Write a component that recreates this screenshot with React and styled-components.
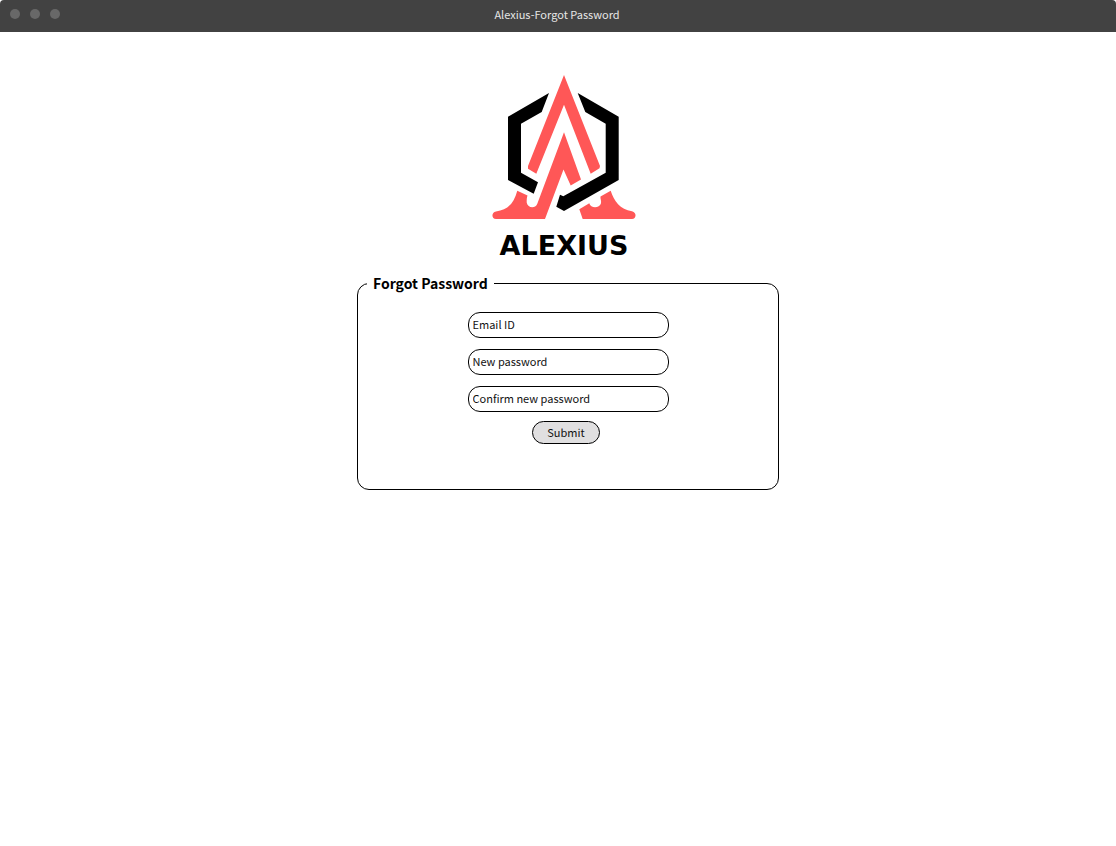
import React from "react";
import styled, { createGlobalStyle } from "styled-components";

const GlobalStyle = createGlobalStyle`
  *, *::before, *::after { box-sizing: border-box; }
  body {
    margin: 0;
    background: #fff;
    color: #000;
    font-family: "Noto Sans CJK SC", "Noto Sans", sans-serif;
    font-size: 11px;
    line-height: 16px;
  }
`;

const TitleBar = styled.header`
  display: grid;
  grid-template-columns: 1fr auto 1fr;
  align-items: center;
  height: 32px;
  padding: 0 12px 4px 10px;
  border-radius: 4px 4px 0 0;
  background: #424242;
  color: #e6e6e6;
`;

const WindowDots = styled.div`
  display: flex;
  gap: 10px;
`;

const Dot = styled.span`
  width: 10px;
  height: 10px;
  border-radius: 50%;
  background: #686868;
`;

const WindowTitle = styled.h1`
  margin: 0;
  font-size: 11px;
  font-weight: 400;
`;

const Page = styled.main`
  display: flex;
  flex-direction: column;
  align-items: center;
  padding: 40px 0 40px 20px;
`;

const Brand = styled.div`
  display: flex;
  flex-direction: column;
  align-items: center;
  padding-right: 8px;
`;

const Mark = styled.svg`
  display: block;
  width: 148px;
  height: 152px;
`;

const Wordmark = styled.div`
  margin-top: 6px;
  font-family: "DejaVu Sans", sans-serif;
  font-size: 27px;
  font-weight: 700;
  line-height: 32px;
`;

const Form = styled.form`
  width: 100%;
  max-width: 422px;
  margin-top: 9px;
`;

const Group = styled.fieldset`
  display: flex;
  flex-direction: column;
  align-items: center;
  min-width: 0;
  margin: 0;
  padding: 17px 0 45px;
  border: 1px solid #000;
  border-radius: 12px;
`;

const Legend = styled.legend`
  margin-left: 9px;
  padding: 0 6px;
  font-size: 14px;
  font-weight: 700;
  line-height: 24px;
`;

const Fields = styled.div`
  display: flex;
  flex-direction: column;
  gap: 11px;
  width: 201px;
`;

const Field = styled.input`
  width: 100%;
  height: 26px;
  padding: 0 4px 2px;
  border: 1px solid #000;
  border-radius: 12px;
  background: #fff;
  color: #111;
  font: inherit;

  &::placeholder {
    color: #111;
    opacity: 1;
  }
`;

const SubmitButton = styled.button`
  width: 68px;
  height: 23px;
  margin: 9px 4px 0 0;
  padding: 0 0 2px;
  border: 1px solid #000;
  border-radius: 12px;
  background: #e0dfe0;
  color: #111;
  font: inherit;
`;

function AlexiusMark() {
  return (
    <Mark viewBox="490 72 148 152" aria-hidden="true">
      <g fill="#000">
        <path d="M549 93 508 116.700V180L533.700 193.700 538 182.300 521 172.700V123.700L541.700 112Z" />
        <path d="M577.700 93 618.700 116.700V180L564 211 556.300 206.700 560 194.700 563.300 196.300 605.700 172.700V123.700L585.300 112Z" />
      </g>
      <g fill="#ff5757">
        <path d="M564 75 600 166 599.500 168.300 590.700 173.700 564 104.700 536.300 173.700 528 168.700V166Z" />
        <path d="M564 132.300 581 179.500 570.700 185.500 563.500 169.500 545 219H496C491.500 219 491 212.500 496 211.500C508 210 514 203 517.300 190.700L527.500 195.500C526.800 197.500 526.700 199 526.700 202.500C527.500 208 535 209 537.200 204Z" />
        <path d="M579.300 209.300 589.300 203.300C590.500 208.500 599.500 208.500 601 203.300C601.500 200.500 600 198.500 600.500 196.500L610.700 190.700C614 201 620 209.500 632 211.300C637 212.500 636.500 219 632 219H582.700Z" />
      </g>
    </Mark>
  );
}

const fields = [
  { name: "email", type: "email", label: "Email ID", autoComplete: "email" },
  { name: "newPassword", type: "password", label: "New password", autoComplete: "new-password" },
  { name: "confirmPassword", type: "password", label: "Confirm new password", autoComplete: "new-password" },
];

export default function App() {
  return (
    <>
      <GlobalStyle />
      <TitleBar>
        <WindowDots aria-hidden="true">
          <Dot />
          <Dot />
          <Dot />
        </WindowDots>
        <WindowTitle>Alexius-Forgot Password</WindowTitle>
      </TitleBar>
      <Page>
        <Brand>
          <AlexiusMark />
          <Wordmark>ALEXIUS</Wordmark>
        </Brand>
        <Form onSubmit={(event) => event.preventDefault()}>
          <Group>
            <Legend>Forgot Password</Legend>
            <Fields>
              {fields.map(({ label, ...field }) => (
                <Field key={field.name} {...field} placeholder={label} aria-label={label} />
              ))}
            </Fields>
            <SubmitButton type="submit">Submit</SubmitButton>
          </Group>
        </Form>
      </Page>
    </>
  );
}
